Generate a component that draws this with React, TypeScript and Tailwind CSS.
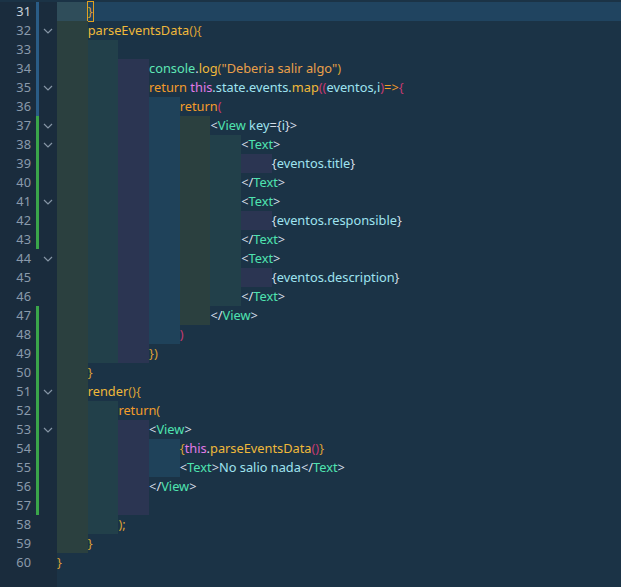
import React from "react";

type Tok = [string, string];

const C = {
  p: "text-[#d4dde6]",
  tag: "text-[#4fe3b0]",
  kw: "text-[#f39c2a]",
  fn: "text-[#f0b93a]",
  str: "text-[#eaa04a]",
  th: "text-[#e27ae8]",
  br: "text-[#d9a035]",
  pk: "text-[#c43a72]",
  id: "text-[#9fe3f0]",
  cn: "text-[#5ee6b5]",
};

const guides = ["bg-[#2b403f]", "bg-[#22404a]", "bg-[#2b3552]", "bg-[#1f425a]"];

const L = (n: number, indent: number, toks: Tok[], fold = false, bar = "") => ({ n, indent, toks, fold, bar });

const lines = [
  L(31, 1, [["}", C.br]], false, "blue"),
  L(32, 1, [["parseEventsData", C.fn], ["(){", C.br]], true, "blue"),
  L(33, 2, [], false, "blue"),
  L(34, 3, [["console", C.cn], [".", C.p], ["log", C.fn], ["(", C.br], ['"Deberia salir algo"', C.str], [")", C.br]], false, "blue"),
  L(35, 3, [["return ", C.kw], ["this", C.th], [".state.events.", C.id], ["map", C.fn], ["((", C.pk], ["eventos,i", C.id], [")", C.pk], ["=>", C.kw], ["{", C.pk]], true, "blue"),
  L(36, 4, [["return", C.kw], ["(", C.pk]], false, "blue"),
  L(37, 5, [["<", C.p], ["View ", C.tag], ["key", C.id], ["=", C.p], ["{", C.p], ["i", C.id], ["}", C.p], [">", C.p]], true, "green"),
  L(38, 6, [["<", C.p], ["Text", C.tag], [">", C.p]], true, "green"),
  L(39, 7, [["{", C.p], ["eventos.title", C.id], ["}", C.p]], false, "green"),
  L(40, 6, [["</", C.p], ["Text", C.tag], [">", C.p]], false, "green"),
  L(41, 6, [["<", C.p], ["Text", C.tag], [">", C.p]], true, "green"),
  L(42, 7, [["{", C.p], ["eventos.responsible", C.id], ["}", C.p]], false, "green"),
  L(43, 6, [["</", C.p], ["Text", C.tag], [">", C.p]], false, "green"),
  L(44, 6, [["<", C.p], ["Text", C.tag], [">", C.p]], true, ""),
  L(45, 7, [["{", C.p], ["eventos.description", C.id], ["}", C.p]], false, ""),
  L(46, 6, [["</", C.p], ["Text", C.tag], [">", C.p]], false, ""),
  L(47, 5, [["</", C.p], ["View", C.tag], [">", C.p]], false, "green"),
  L(48, 4, [[")", C.pk]], false, "green"),
  L(49, 3, [["})", C.br]], false, "green"),
  L(50, 1, [["}", C.br]], false, "green"),
  L(51, 1, [["render", C.fn], ["(){", C.br]], true, "green"),
  L(52, 2, [["return", C.kw], ["(", C.br]], false, "green"),
  L(53, 3, [["<", C.p], ["View", C.tag], [">", C.p]], true, "green"),
  L(54, 4, [["{", C.br], ["this", C.th], [".", C.p], ["parseEventsData", C.fn], ["()", C.pk], ["}", C.br]], false, "green"),
  L(55, 4, [["<", C.p], ["Text", C.tag], [">", C.p], ["No salio nada", C.id], ["</", C.p], ["Text", C.tag], [">", C.p]], false, "green"),
  L(56, 3, [["</", C.p], ["View", C.tag], [">", C.p]], false, "green"),
  L(57, 3, [], false, "green"),
  L(58, 2, [[");", C.br]], false, ""),
  L(59, 1, [["}", C.br]], false, ""),
  L(60, 0, [["}", C.br]], false, ""),
];

function Chevron() {
  return (
    <svg width="12" height="12" viewBox="0 0 12 12" fill="none" stroke="#8595a5" strokeWidth="1.2">
      <path d="M2 4 L6 8 L10 4" />
    </svg>
  );
}

export default function App() {
  return (
    <div className="w-[621px] h-[587px] bg-[#1b3346] overflow-hidden flex pt-[2px] font-['Liberation_Mono'] text-[12.8px]">
      <div className="w-[57px] bg-[#1a2c3d] flex flex-col shrink-0">
        {lines.map((l) => (
          <div key={l.n} className="h-[19px] flex items-center">
            <span className={`w-[31px] text-right ${l.n === 31 ? "text-[#c8d2dc]" : "text-[#8a9aab]"}`}>{l.n}</span>
            <span className={`w-[3px] h-[19px] ml-[5px] ${l.bar === "blue" ? "bg-[#2a5c86]" : l.bar === "green" ? "bg-[#3aa54a]" : ""}`} />
            <span className="w-[18px] flex justify-center">{l.fold && <Chevron />}</span>
          </div>
        ))}
      </div>
      <div className="flex-1 flex flex-col">
        {lines.map((l) => (
          <div key={l.n} className={`h-[19px] flex items-center whitespace-pre ${l.n === 31 ? "bg-[#204460]" : ""}`}>
            {Array.from({ length: l.indent }).map((_, i) => (
              <span key={i} className={`w-[30.7px] h-[19px] shrink-0 ${l.n === 31 ? "bg-[#2f4d5a]" : guides[i % 4]}`} />
            ))}
            {l.toks.map((t, i) => (
              <span key={i} className={`${t[1]} ${l.n === 31 ? "outline outline-1 outline-[#e0a020]" : ""}`}>{t[0]}</span>
            ))}
          </div>
        ))}
      </div>
    </div>
  );
}
